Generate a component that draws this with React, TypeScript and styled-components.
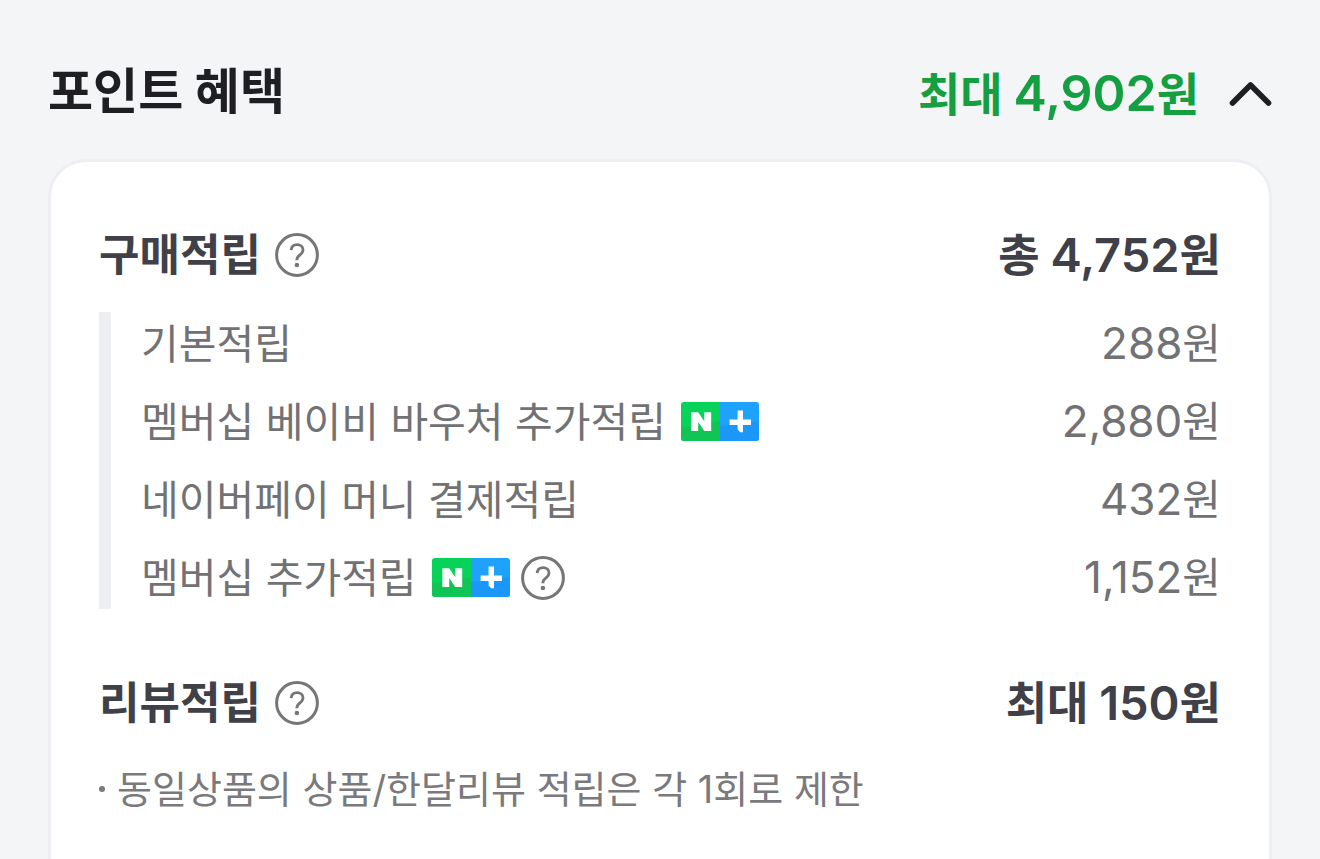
import React from "react";
import styled, { createGlobalStyle } from "styled-components";

type Size = "large" | "medium" | "small";

const GlobalStyle = createGlobalStyle`
  * { box-sizing: border-box; }
  body {
    margin: 0;
    background: #f3f5f7;
    font-family: Inter, "Noto Sans CJK KR", sans-serif;
  }
  button {
    margin: 0;
    padding: 0;
    border: 0;
    background: none;
    font: inherit;
    color: inherit;
    cursor: pointer;
  }
  h2, h3, p, ul, dl, dt, dd { margin: 0; padding: 0; }
  svg { display: block; }
`;

const Page = styled.main`
  display: flex;
  flex-direction: column;
  min-height: 100vh;
  padding: 24px 48px 0;
`;

const Header = styled.header`
  display: flex;
  align-items: center;
  justify-content: space-between;
  height: 135px;
`;

const Title = styled.h2`
  font-size: 49px;
  line-height: 72px;
  font-weight: 700;
  color: #1e1e23;
`;

const Toggle = styled.button`
  display: flex;
  align-items: center;
  gap: 30px;
  padding-top: 4px;
`;

const Amount = styled.span<{ $size: Size }>`
  font-size: ${({ $size }) => ({ large: 46, medium: 45, small: 42 })[$size]}px;
  line-height: 72px;
  font-weight: ${({ $size }) => ($size === "small" ? 400 : 700)};
  color: ${({ $size }) =>
    ({ large: "#149f40", medium: "#404048", small: "#727274" })[$size]};
  white-space: nowrap;
`;

const Digits = styled.span<{ $size: Size }>`
  font-size: ${({ $size }) => ({ large: 50, medium: 47, small: 44 })[$size]}px;
  font-weight: ${({ $size }) => ($size === "small" ? 400 : 600)};
`;

const Card = styled.section`
  flex: 1;
  padding: 57px 48px 24px;
  border: 3px solid #eeeff2;
  border-bottom: 0;
  border-radius: 38px 38px 0 0;
  background: #fff;
`;

const SectionHead = styled.div`
  display: flex;
  align-items: center;
  justify-content: space-between;
  height: 72px;
`;

const SectionTitle = styled.h3`
  font-size: 44px;
  line-height: 72px;
  font-weight: 700;
  color: #404048;
`;

const Label = styled.div`
  display: flex;
  align-items: center;
  gap: 14px;
`;

const Details = styled.dl`
  display: flex;
  flex-direction: column;
  justify-content: center;
  gap: 6px;
  margin: 21px 0 58px;
  padding-left: 30px;
  height: 297px;
  border-left: 12px solid #eceef2;
`;

const DetailRow = styled.div`
  display: flex;
  align-items: center;
  justify-content: space-between;
  height: 72px;
`;

const DetailName = styled.dt`
  display: flex;
  align-items: center;
  gap: 11px;
  font-size: 41px;
  line-height: 72px;
  color: #727274;
`;

const Badge = styled.span`
  display: flex;
  margin-left: 4px;
`;

const Note = styled.ul`
  margin-top: 14px;
  list-style: none;
  font-size: 38px;
  line-height: 72px;
  color: #7a7a7c;
`;

const NoteItem = styled.li`
  display: flex;
  align-items: center;
  gap: 12px;

  &::before {
    content: "";
    width: 6px;
    height: 6px;
    border-radius: 3px;
    background: #7a7a7c;
  }
`;

function Help({ label }: { label: string }) {
  return (
    <button type="button" aria-label={label}>
      <svg width="44" height="44" viewBox="0 0 44 44" fill="none">
        <circle cx="22" cy="22" r="20.4" stroke="#767678" strokeWidth="3" />
        <path
          d="M16.1 17.2C16.4 13.7 18.8 11.6 22.1 11.6C25.5 11.6 28 13.8 28 16.8C28 19 26.9 20.4 25 21.8C22.8 23.4 21.8 24.5 21.8 27.2"
          stroke="#767678"
          strokeWidth="2.8"
        />
        <circle cx="21.9" cy="32" r="2.3" fill="#767678" />
      </svg>
    </button>
  );
}

function MembershipBadge() {
  return (
    <Badge>
      <svg width="78" height="39" viewBox="0 0 78 39" role="img" aria-label="네이버플러스 멤버십">
        <path d="M3 0H39V39H3Q0 39 0 36V3Q0 0 3 0Z" fill="#07d25a" />
        <path d="M0 25Q20 24 39 19V39H3Q0 39 0 36Z" fill="#10c456" />
        <path d="M39 0H75Q78 0 78 3V36Q78 39 75 39H39Z" fill="#1ea2fc" />
        <path d="M39 24Q60 23 78 19V36Q78 39 75 39H39Z" fill="#1a97f8" />
        <path d="M10.3 10.3H17.2L23.3 19.2V10.3H30.2V29H23.3L17.2 20.1V29H10.3Z" fill="#fff" />
        <path d="M56.6 8.6H62V17.6H70V23H62V30.2H59.2L56.6 27.6V23H48.6V17.6H56.6Z" fill="#fff" />
      </svg>
    </Badge>
  );
}

function Won({ prefix, value, size }: { prefix?: string; value: string; size: Size }) {
  return (
    <Amount $size={size}>
      {prefix && `${prefix} `}
      <Digits $size={size}>{value}</Digits>원
    </Amount>
  );
}

const details = [
  { name: "기본적립", value: "288" },
  { name: "멤버십 베이비 바우처 추가적립", value: "2,880", badge: true },
  { name: "네이버페이 머니 결제적립", value: "432" },
  { name: "멤버십 추가적립", value: "1,152", badge: true, help: true },
];

export default function App() {
  return (
    <>
      <GlobalStyle />
      <Page>
        <Header>
          <Title>포인트 혜택</Title>
          <Toggle type="button" aria-expanded="true">
            <Won prefix="최대" value="4,902" size="large" />
            <svg width="43" height="26" viewBox="0 0 43 26" fill="none" aria-hidden="true">
              <path
                d="M3.5 22L21.5 4L39.5 22"
                stroke="#1e1e23"
                strokeWidth="5.6"
                strokeLinecap="round"
                strokeLinejoin="round"
              />
            </svg>
          </Toggle>
        </Header>
        <Card>
          <SectionHead>
            <Label>
              <SectionTitle>구매적립</SectionTitle>
              <Help label="구매적립 안내" />
            </Label>
            <Won prefix="총" value="4,752" size="medium" />
          </SectionHead>
          <Details>
            {details.map((item) => (
              <DetailRow key={item.name}>
                <DetailName>
                  {item.name}
                  {item.badge && <MembershipBadge />}
                  {item.help && <Help label={`${item.name} 안내`} />}
                </DetailName>
                <dd>
                  <Won value={item.value} size="small" />
                </dd>
              </DetailRow>
            ))}
          </Details>
          <SectionHead>
            <Label>
              <SectionTitle>리뷰적립</SectionTitle>
              <Help label="리뷰적립 안내" />
            </Label>
            <Won prefix="최대" value="150" size="medium" />
          </SectionHead>
          <Note>
            <NoteItem>동일상품의 상품/한달리뷰 적립은 각 1회로 제한</NoteItem>
          </Note>
        </Card>
      </Page>
    </>
  );
}
